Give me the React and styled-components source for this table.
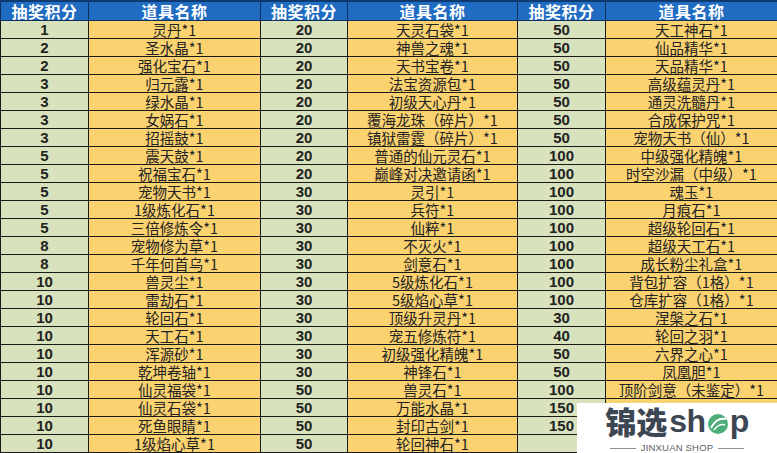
import React from "react";
import styled, { createGlobalStyle } from "styled-components";

const rows = [
  ["1", "灵丹*1", "20", "天灵石袋*1", "50", "天工神石*1"],
  ["2", "圣水晶*1", "20", "神兽之魂*1", "50", "仙品精华*1"],
  ["2", "强化宝石*1", "20", "天书宝卷*1", "50", "天品精华*1"],
  ["3", "归元露*1", "20", "法宝资源包*1", "50", "高级蕴灵丹*1"],
  ["3", "绿水晶*1", "20", "初级天心丹*1", "50", "通灵洗髓丹*1"],
  ["3", "女娲石*1", "20", "覆海龙珠（碎片）*1", "50", "合成保护咒*1"],
  ["3", "招摇鼓*1", "20", "镇狱雷霆（碎片）*1", "50", "宠物天书（仙）*1"],
  ["5", "震天鼓*1", "20", "普通的仙元灵石*1", "100", "中级强化精魄*1"],
  ["5", "祝福宝石*1", "20", "巅峰对决邀请函*1", "100", "时空沙漏（中级）*1"],
  ["5", "宠物天书*1", "30", "灵引*1", "100", "魂玉*1"],
  ["5", "1级炼化石*1", "30", "兵符*1", "100", "月痕石*1"],
  ["5", "三倍修炼令*1", "30", "仙粹*1", "100", "超级轮回石*1"],
  ["8", "宠物修为草*1", "30", "不灭火*1", "100", "超级天工石*1"],
  ["8", "千年何首乌*1", "30", "剑意石*1", "100", "成长粉尘礼盒*1"],
  ["10", "兽灵尘*1", "30", "5级炼化石*1", "100", "背包扩容（1格）*1"],
  ["10", "雷劫石*1", "30", "5级焰心草*1", "100", "仓库扩容（1格）*1"],
  ["10", "轮回石*1", "30", "顶级升灵丹*1", "30", "涅槃之石*1"],
  ["10", "天工石*1", "30", "宠五修炼符*1", "40", "轮回之羽*1"],
  ["10", "浑源砂*1", "30", "初级强化精魄*1", "50", "六界之心*1"],
  ["10", "乾坤卷轴*1", "30", "神锋石*1", "50", "凤凰胆*1"],
  ["10", "仙灵福袋*1", "50", "兽灵石*1", "100", "顶阶剑意（未鉴定）*1"],
  ["10", "仙灵石袋*1", "50", "万能水晶*1", "150", ""],
  ["10", "死鱼眼睛*1", "50", "封印古剑*1", "150", ""],
  ["10", "1级焰心草*1", "50", "轮回神石*1", "", ""],
];

const widths = [88, 172, 87, 170, 88, 172];

const GlobalStyle = createGlobalStyle`
  html, body {
    margin: 0;
    padding: 0;
    background: #ffffff;
  }
`;

const Page = styled.div`
  position: relative;
  width: 777px;
  height: 453px;
  overflow: hidden;
`;

const Table = styled.table`
  width: 777px;
  border-collapse: collapse;
  table-layout: fixed;
`;

const HeadCell = styled.th`
  height: 18px;
  padding: 0;
  background: #1f6cc2;
  border: 1px solid #0d2f5a;
  border-top: 2px solid #0f3a70;
  color: #ffffff;
  font-family: "Noto Sans CJK SC", "Liberation Sans", sans-serif;
  font-size: 16px;
  font-weight: 700;
  line-height: 17px;
  text-align: center;
  letter-spacing: 0.5px;
`;

const Cell = styled.td`
  height: 17px;
  padding: 0;
  border: 1px solid #1a1a1a;
  background: ${(p) => (p.$points ? "#d8e3bd" : "#fbd270")};
  color: #222222;
  font-family: ${(p) =>
    p.$points
      ? '"Liberation Sans", Arial, sans-serif'
      : '"Noto Sans CJK SC", "Liberation Sans", sans-serif'};
  font-size: ${(p) => (p.$points ? "15px" : "14.5px")};
  font-weight: ${(p) => (p.$points ? 700 : 400)};
  line-height: 17px;
  text-align: center;
  white-space: nowrap;
  overflow: hidden;
`;

const Watermark = styled.div`
  position: absolute;
  left: 577px;
  top: 403px;
  width: 200px;
  height: 50px;
  background: #ffffff;
  display: flex;
  flex-direction: column;
  align-items: center;
`;

const LogoLine = styled.div`
  display: flex;
  align-items: center;
  margin-top: 1px;
  height: 34px;
  color: #3c4753;
  font-family: "Noto Sans CJK SC", "Liberation Sans", sans-serif;
  font-weight: 900;
  font-size: 31px;
  line-height: 34px;
`;

const Latin = styled.span`
  font-family: "Liberation Sans", Arial, sans-serif;
  font-weight: 700;
  font-size: 32px;
  margin-left: ${(p) => (p.$tight ? "0" : "2px")};
  letter-spacing: -0.5px;
`;

const Leaf = styled.svg`
  width: 22px;
  height: 22px;
  margin: 6px 1px 0;
`;

const SubLine = styled.div`
  display: flex;
  align-items: center;
  gap: 5px;
  margin-top: 5px;
  color: #5a5f66;
  font-family: "Liberation Sans", Arial, sans-serif;
  font-size: 9.5px;
  line-height: 10px;
  letter-spacing: 0.2px;
`;

const Rule = styled.span`
  width: 26px;
  height: 1px;
  background: #8a8f96;
`;

export default function App() {
  return (
    <Page>
      <GlobalStyle />
      <Table>
        <colgroup>
          {widths.map((w, i) => (
            <col key={i} style={{ width: w }} />
          ))}
        </colgroup>
        <thead>
          <tr>
            {[0, 1, 2].map((i) => (
              <React.Fragment key={i}>
                <HeadCell>抽奖积分</HeadCell>
                <HeadCell>道具名称</HeadCell>
              </React.Fragment>
            ))}
          </tr>
        </thead>
        <tbody>
          {rows.map((r, ri) => (
            <tr key={ri}>
              {r.map((v, ci) => (
                <Cell key={ci} $points={ci % 2 === 0}>
                  {v}
                </Cell>
              ))}
            </tr>
          ))}
        </tbody>
      </Table>
      <Watermark>
        <LogoLine>
          锦选
          <Latin>sh</Latin>
          <Leaf viewBox="0 0 22 22">
            <circle cx="11" cy="11" r="10" fill="#4caf7a" />
            <path d="M4 15 C8 7, 14 5, 19 6" stroke="#ffffff" strokeWidth="2" fill="none" />
            <path d="M7 17 C11 12, 15 11, 18 12" stroke="#ffffff" strokeWidth="1.5" fill="none" />
          </Leaf>
          <Latin $tight>p</Latin>
        </LogoLine>
        <SubLine>
          <Rule />
          JINXUAN SHOP
          <Rule />
        </SubLine>
      </Watermark>
    </Page>
  );
}
